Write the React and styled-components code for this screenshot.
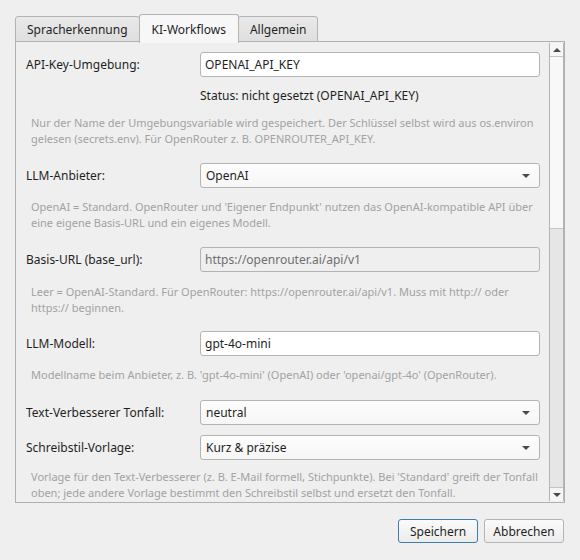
import React from "react";
import styled, { createGlobalStyle } from "styled-components";

const GlobalStyle = createGlobalStyle`
  html, body {
    margin: 0;
    padding: 0;
    background: #efefef;
  }
  * { box-sizing: border-box; }
`;

const Window = styled.div`
  width: 580px;
  height: 560px;
  background: #efefef;
  font: 12px "Noto Sans", "Open Sans", sans-serif;
  color: #1f1f1f;
  padding: 15px 15px 0 15px;
  display: flex;
  flex-direction: column;
`;

const TabBar = styled.div`
  display: flex;
  align-items: flex-end;
  height: 27px;
  position: relative;
  z-index: 1;
`;

const Tab = styled.div`
  height: ${(p) => (p.$active ? "29px" : "26px")};
  padding: 0 ${(p) => (p.$active ? "12px" : "11px")};
  padding-top: 1px;
  margin: 0 ${(p) => (p.$active ? "-1px" : "0")};
  margin-bottom: ${(p) => (p.$active ? "-1px" : "0")};
  border: 1px solid #b3b3b3;
  border-bottom: ${(p) => (p.$active ? "none" : "1px solid #b3b3b3")};
  border-radius: 3px 3px 0 0;
  background: ${(p) => (p.$active ? "#f7f7f7" : "linear-gradient(#e9e9e9, #dfdfdf)")};
  display: flex;
  align-items: center;
  justify-content: center;
  position: relative;
  z-index: ${(p) => (p.$active ? 2 : 1)};
  white-space: nowrap;
`;

const Pane = styled.div`
  height: 462px;
  border: 1px solid #b0b0b0;
  display: flex;
  margin-top: -1px;
`;

const Content = styled.div`
  flex: 1;
  overflow: hidden;
  padding: 10px 9px 0 10px;
  display: flex;
  flex-direction: column;
`;

const FieldRow = styled.div`
  display: grid;
  grid-template-columns: 174px 340px;
  align-items: center;
  height: 25px;
  flex-shrink: 0;
  margin-top: ${(p) => p.$gap || 0}px;
`;

const Label = styled.div`
  white-space: nowrap;
`;

const Input = styled.div`
  height: 25px;
  border: 1px solid #b4b4b4;
  border-radius: 3px;
  background: ${(p) => (p.$disabled ? "#efefef" : "#ffffff")};
  color: ${(p) => (p.$disabled ? "#6e6e6e" : "#1f1f1f")};
  display: flex;
  align-items: center;
  padding: 0 4px;
  white-space: nowrap;
`;

const Combo = styled.div`
  height: 25px;
  border: 1px solid #b4b4b4;
  border-radius: 3px;
  background: linear-gradient(#fdfdfd, #f6f6f6);
  display: flex;
  align-items: center;
  justify-content: space-between;
  padding: 0 9px 0 5px;
  white-space: nowrap;
`;

const Arrow = styled.span`
  width: 0;
  height: 0;
  border-left: 4px solid transparent;
  border-right: 4px solid transparent;
  border-top: 4px solid #4a4a4a;
`;

const Status = styled.div`
  margin-top: 10px;
  padding-left: 174px;
  line-height: 18px;
  flex-shrink: 0;
`;

const Hint = styled.div`
  margin-top: ${(p) => p.$gap || 0}px;
  padding-left: 5px;
  font-size: 11px;
  line-height: 16px;
  color: #a2a2a2;
  flex-shrink: 0;
  white-space: nowrap;
`;

const ScrollBar = styled.div`
  width: 15px;
  border-left: 1px solid #b4b4b4;
  border-right: 1px solid #b4b4b4;
  margin: 1px 0 1px 0;
  background: #e6e6e6;
  display: flex;
  flex-direction: column;
`;

const ScrollButton = styled.div`
  height: 14px;
  background: #f6f6f6;
  border-top: ${(p) => (p.$down ? "1px solid #c4c4c4" : "none")};
  border-bottom: ${(p) => (p.$down ? "none" : "1px solid #c4c4c4")};
  display: flex;
  align-items: center;
  justify-content: center;
`;

const ScrollArrow = styled.span`
  width: 0;
  height: 0;
  border-left: 4px solid transparent;
  border-right: 4px solid transparent;
  ${(p) =>
    p.$down ? "border-top: 4px solid #4a4a4a;" : "border-bottom: 4px solid #4a4a4a;"}
`;

const Handle = styled.div`
  height: 172px;
  background: #f8f8f8;
  border-bottom: 1px solid #c4c4c4;
`;

const Track = styled.div`
  flex: 1;
`;

const Footer = styled.div`
  display: flex;
  justify-content: flex-end;
  gap: 6px;
  padding: 16px 1px 0 0;
`;

const Button = styled.button`
  height: 24px;
  min-width: 80px;
  padding: 0 8px;
  font: 12px "Noto Sans", "Open Sans", sans-serif;
  color: #1f1f1f;
  border-radius: 3px;
  border: 1px solid ${(p) => (p.$default ? "#3d7eab" : "#b4b4b4")};
  background: linear-gradient(#fbfbfb, #ececec);
`;

function Field({ label, gap, children }) {
  return (
    <FieldRow $gap={gap}>
      <Label>{label}</Label>
      {children}
    </FieldRow>
  );
}

function Select({ value }) {
  return (
    <Combo>
      <span>{value}</span>
      <Arrow />
    </Combo>
  );
}

export default function App() {
  return (
    <>
      <GlobalStyle />
      <Window>
        <TabBar>
          <Tab>Spracherkennung</Tab>
          <Tab $active>KI-Workflows</Tab>
          <Tab>Allgemein</Tab>
        </TabBar>
        <Pane>
          <Content>
            <Field label="API-Key-Umgebung:">
              <Input>OPENAI_API_KEY</Input>
            </Field>
            <Status>Status: nicht gesetzt (OPENAI_API_KEY)</Status>
            <Hint $gap={10}>
              Nur der Name der Umgebungsvariable wird gespeichert. Der Schlüssel selbst wird aus os.environ
              <br />
              gelesen (secrets.env). Für OpenRouter z. B. OPENROUTER_API_KEY.
            </Hint>
            <Field label="LLM-Anbieter:" gap={16}>
              <Select value="OpenAI" />
            </Field>
            <Hint $gap={11}>
              OpenAI = Standard. OpenRouter und 'Eigener Endpunkt' nutzen das OpenAI-kompatible API über
              <br />
              eine eigene Basis-URL und ein eigenes Modell.
            </Hint>
            <Field label="Basis-URL (base_url):" gap={16}>
              <Input $disabled>https://openrouter.ai/api/v1</Input>
            </Field>
            <Hint $gap={12}>
              Leer = OpenAI-Standard. Für OpenRouter: https://openrouter.ai/api/v1. Muss mit http:// oder
              <br />
              https:// beginnen.
            </Hint>
            <Field label="LLM-Modell:" gap={15}>
              <Input>gpt-4o-mini</Input>
            </Field>
            <Hint $gap={11}>
              Modellname beim Anbieter, z. B. 'gpt-4o-mini' (OpenAI) oder 'openai/gpt-4o' (OpenRouter).
            </Hint>
            <Field label="Text-Verbesserer Tonfall:" gap={17}>
              <Select value="neutral" />
            </Field>
            <Field label="Schreibstil-Vorlage:" gap={10}>
              <Select value="Kurz & präzise" />
            </Field>
            <Hint $gap={9}>
              Vorlage für den Text-Verbesserer (z. B. E-Mail formell, Stichpunkte). Bei 'Standard' greift der Tonfall
              <br />
              oben; jede andere Vorlage bestimmt den Schreibstil selbst und ersetzt den Tonfall.
            </Hint>
          </Content>
          <ScrollBar>
            <ScrollButton>
              <ScrollArrow />
            </ScrollButton>
            <Handle />
            <Track />
            <ScrollButton $down>
              <ScrollArrow $down />
            </ScrollButton>
          </ScrollBar>
        </Pane>
        <Footer>
          <Button $default>Speichern</Button>
          <Button>Abbrechen</Button>
        </Footer>
      </Window>
    </>
  );
}
